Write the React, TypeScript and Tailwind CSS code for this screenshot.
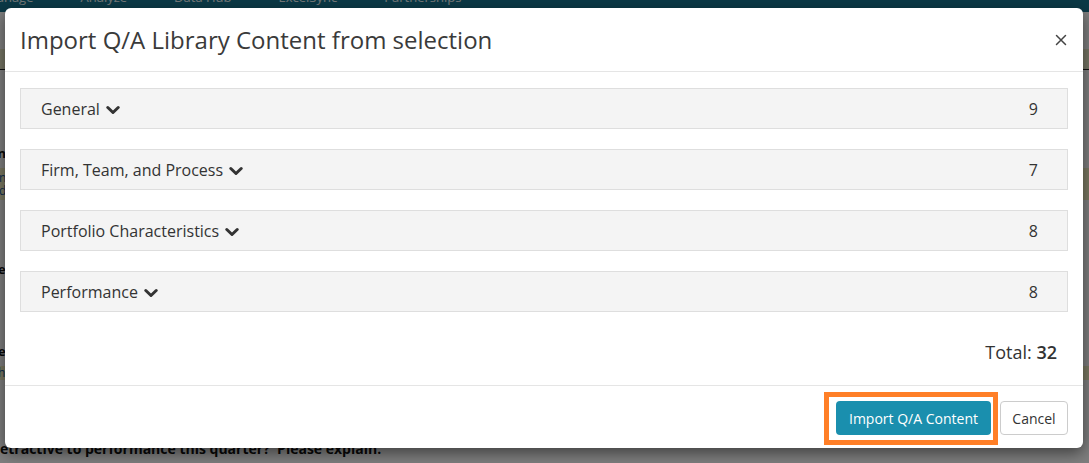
import React from 'react';

interface Group {
  id: string;
  name: string;
  count: number;
}

const groups: Group[] = [
  { id: 'general', name: 'General', count: 9 },
  { id: 'firm', name: 'Firm, Team, and Process', count: 7 },
  { id: 'portfolio', name: 'Portfolio Characteristics', count: 8 },
  { id: 'performance', name: 'Performance', count: 8 },
];

const Chevron: React.FC = () => (
  <svg width="14" height="10" viewBox="0 0 14 10" className="ml-[6px] mt-[2px]">
    <path d="M1.8 2.5 L7 7.5 L12.2 2.5" fill="none" stroke="#333" strokeWidth="3" strokeLinecap="round" strokeLinejoin="round" />
  </svg>
);

const App: React.FC = () => {
  const total = groups.reduce((s, g) => s + g.count, 0);

  return (
    <div className="relative h-[463px] w-[1089px] overflow-hidden bg-white font-['Open_Sans',sans-serif] text-[#333]">
      {/* Page behind the dialog */}
      <div className="flex h-[463px] flex-col">
        <nav className="-mt-[38px] flex h-[50px] shrink-0 items-end gap-[47px] bg-[#16738d] pb-[5px] text-[13px] leading-[20px] text-[#e6eef0]">
          <span className="-ml-[15px]">Manage</span>
          <span>Analyze</span>
          <span>Data Hub</span>
          <span>ExcelSync</span>
          <span>Partnerships</span>
        </nav>
        <div className="h-[37px] shrink-0" />
        <div className="h-[21px] shrink-0 border-b border-[#222] bg-[#efeccb]" />
        <div className="h-[76px] shrink-0" />
        <div className="flex h-[16px] shrink-0 items-center text-[13px] font-bold text-[#111]">
          <span className="-ml-[52px]">Comment</span>
        </div>
        <div className="h-[6px] shrink-0" />
        <div className="flex h-[32px] shrink-0 flex-col justify-center bg-[#f6f2c4] text-[12px] leading-[13px] text-[#1c5a9c]">
          <span className="-ml-[1px]">n</span>
          <span className="-ml-[1px]">d</span>
        </div>
        <div className="h-[62px] shrink-0" />
        <div className="flex h-[16px] shrink-0 items-center text-[13px] font-bold text-[#111]">
          <span className="-ml-[2px]">e,</span>
        </div>
        <div className="h-[66px] shrink-0" />
        <div className="flex h-[16px] shrink-0 items-center text-[13px] font-bold text-[#111]">
          <span className="-ml-[2px]">e</span>
        </div>
        <div className="h-[6px] shrink-0" />
        <div className="flex h-[14px] shrink-0 items-center bg-[#f6f2c4] text-[12px] text-[#1c5a9c]">
          <span className="-ml-[2px]">h</span>
        </div>
        <div className="h-[59px] shrink-0" />
        <div className="flex h-[18px] shrink-0 items-center text-[14px] font-bold text-[#111]">
          <span>etractive to performance this quarter?&nbsp; Please explain.</span>
        </div>
      </div>

      {/* Backdrop */}
      <div className="absolute inset-0 bg-black/50" />

      {/* Dialog */}
      <div className="absolute left-[5px] top-[8px] w-[1078px] rounded-[6px] bg-white shadow-[0_5px_15px_rgba(0,0,0,0.5)]">
        <div className="flex h-[64px] items-center justify-between border-b border-[#e5e5e5] pl-[15px] pr-[16px]">
          <h4 className="text-[24px] font-normal text-[#3a3a3a]">Import Q/A Library Content from selection</h4>
          <button className="leading-none">
            <svg width="12" height="12" viewBox="0 0 12 12">
              <path d="M1.5 1.5 L10.5 10.5 M10.5 1.5 L1.5 10.5" stroke="#444" strokeWidth="1.5" strokeLinecap="round" />
            </svg>
          </button>
        </div>

        <div className="px-[15px] pb-[20px] pt-[16px]">
          <div className="flex flex-col gap-[20px]">
            {groups.map((g) => (
              <div
                key={g.id}
                className="flex h-[41px] items-center justify-between border border-[#dedede] bg-[#f4f4f4] pl-[20px] pr-[29px] text-[16px] text-[#333]"
              >
                <div className="flex items-center">
                  <span>{g.name}</span>
                  <Chevron />
                </div>
                <span>{g.count}</span>
              </div>
            ))}
          </div>
          <div className="mt-[27px] h-[26px] pr-[11px] text-right text-[18px] leading-[26px] text-[#333]">
            Total: <span className="font-semibold">{total}</span>
          </div>
        </div>

        <div className="flex justify-end gap-[9px] border-t border-[#e5e5e5] px-[15px] pb-[13px] pt-[15px]">
          <button className="h-[34px] w-[155px] rounded-[4px] bg-[#1a8fae] text-[14px] text-white">Import Q/A Content</button>
          <button className="h-[34px] w-[68px] rounded-[4px] border border-[#cccccc] bg-white text-[14px] text-[#333]">Cancel</button>
        </div>
      </div>

      {/* Highlight annotation around the primary action */}
      <div className="pointer-events-none absolute left-[824px] top-[392px] h-[53px] w-[174px] border-[5px] border-[#ff7f27]" />
    </div>
  );
};

export default App;
